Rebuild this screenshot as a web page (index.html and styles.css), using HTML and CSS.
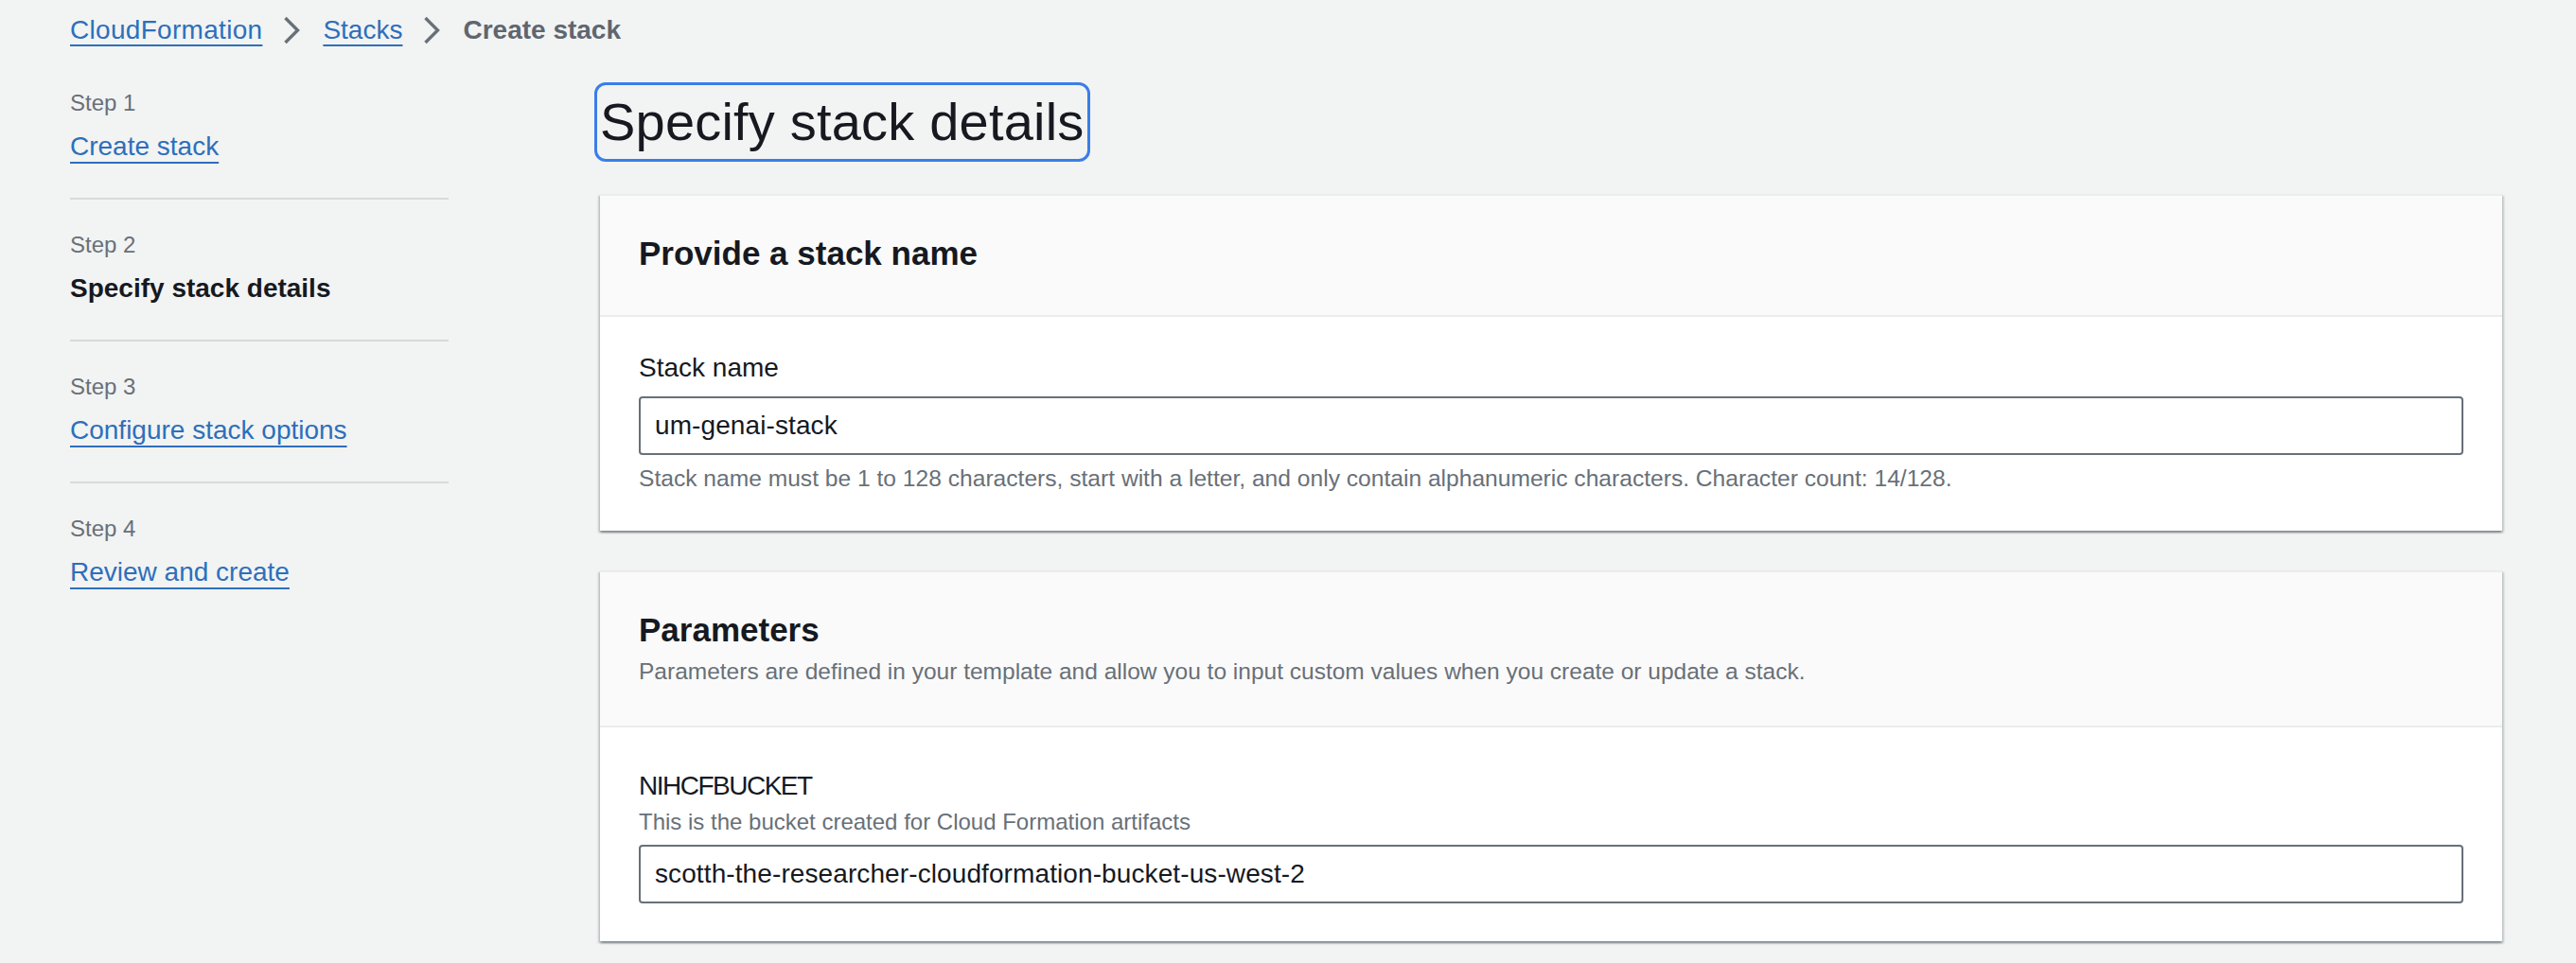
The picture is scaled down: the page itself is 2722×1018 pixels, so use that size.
FILE: index.html
```html
<!DOCTYPE html>
<html lang="en">
<head>
<meta charset="utf-8">
<title>Create stack - CloudFormation</title>
<link rel="stylesheet" href="styles.css">
</head>
<body>
<nav class="breadcrumbs" aria-label="Breadcrumbs">
  <a class="crumb-link" href="#">CloudFormation</a>
  <svg class="crumb-sep" viewBox="0 0 20 30" aria-hidden="true"><path d="M3.5 2 L16.5 15 L3.5 28"/></svg>
  <a class="crumb-link" href="#">Stacks</a>
  <svg class="crumb-sep" viewBox="0 0 20 30" aria-hidden="true"><path d="M3.5 2 L16.5 15 L3.5 28"/></svg>
  <span class="crumb-current">Create stack</span>
</nav>
<div class="layout">
  <aside class="steps">
    <ol class="step-list">
      <li class="step">
        <span class="step-num">Step 1</span>
        <a class="step-link" href="#">Create stack</a>
      </li>
      <li class="step">
        <span class="step-num">Step 2</span>
        <span class="step-current">Specify stack details</span>
      </li>
      <li class="step">
        <span class="step-num">Step 3</span>
        <a class="step-link" href="#">Configure stack options</a>
      </li>
      <li class="step">
        <span class="step-num">Step 4</span>
        <a class="step-link" href="#">Review and create</a>
      </li>
    </ol>
  </aside>
  <main class="content">
    <h1 class="page-title">Specify stack details</h1>
    <section class="card">
      <div class="card-header">
        <h2 class="card-title">Provide a stack name</h2>
      </div>
      <div class="card-body">
        <label class="field-label" for="stack-name">Stack name</label>
        <input class="text-input" id="stack-name" type="text" value="um-genai-stack">
        <p class="field-hint">Stack name must be 1 to 128 characters, start with a letter, and only contain alphanumeric characters. Character count: 14/128.</p>
      </div>
    </section>
    <section class="card card-params">
      <div class="card-header">
        <h2 class="card-title">Parameters</h2>
        <p class="card-desc">Parameters are defined in your template and allow you to input custom values when you create or update a stack.</p>
      </div>
      <div class="card-body card-body-params">
        <label class="field-label field-label-caps" for="nihcf">NIHCFBUCKET</label>
        <p class="field-desc">This is the bucket created for Cloud Formation artifacts</p>
        <input class="text-input text-input-tight" id="nihcf" type="text" value="scotth-the-researcher-cloudformation-bucket-us-west-2">
      </div>
    </section>
  </main>
</div>
</body>
</html>
```
FILE: styles.css
```css
html, body {
  margin: 0;
  padding: 0;
}
body {
  background: #f2f3f3;
  color: #16191f;
  font-family: "Liberation Sans", Arial, sans-serif;
  font-size: 28px;
  line-height: 40px;
  padding: 12px 78px 0 74px;
  min-height: 1018px;
  box-sizing: border-box;
  overflow: hidden;
}

/* Breadcrumbs */
.breadcrumbs {
  display: flex;
  align-items: center;
  height: 40px;
  line-height: 40px;
}
.crumb-link {
  color: #2d6fbb;
  text-decoration: underline;
  text-decoration-thickness: 2px;
  text-underline-offset: 6px;
}
.crumb-link:first-child {
  letter-spacing: 0.3px;
}
.crumb-sep {
  width: 20px;
  height: 30px;
  margin: 0 23px 0 21px;
  fill: none;
  stroke: #687078;
  stroke-width: 3.4;
  stroke-linecap: butt;
  stroke-linejoin: miter;
}
.crumb-current {
  color: #5f666f;
  font-weight: bold;
}

/* Layout */
.layout {
  display: flex;
  align-items: flex-start;
  margin-top: 41px;
}
.steps {
  width: 400px;
  flex: none;
}
.step-list {
  list-style: none;
  margin: 0;
  padding: 0;
}
.step {
  display: flex;
  flex-direction: column;
  align-items: flex-start;
  padding: 32px 0 34px;
}
.step:first-child {
  padding-top: 0;
}
.step + .step {
  border-top: 2px solid #d5dbdb;
}
.step-num {
  font-size: 24px;
  line-height: 32px;
  color: #687078;
  margin-bottom: 10px;
}
.step-link {
  color: #2d6fbb;
  text-decoration: underline;
  text-decoration-thickness: 2px;
  text-underline-offset: 7px;
}
.step-current {
  font-weight: bold;
  color: #16191f;
}

/* Main */
.content {
  flex: 1;
  margin-left: 160px;
  min-width: 0;
}
.page-title {
  display: inline-block;
  margin: 0;
  font-size: 56px;
  line-height: 72px;
  font-weight: normal;
  color: #16191f;
  outline: 3px solid #3a7ee8;
  outline-offset: 3px;
  border-radius: 6px;
  letter-spacing: 0.2px;
}
.card {
  margin-top: 40px;
  background: #ffffff;
  border-top: 2px solid #eaeded;
  box-shadow: 0 2px 2px 0 rgba(0, 28, 36, 0.3), 2px 2px 2px 0 rgba(0, 28, 36, 0.15), -2px 2px 2px 0 rgba(0, 28, 36, 0.15);
}
.card-params {
  margin-top: 42px;
}
.card-header {
  background: #fafafa;
  border-bottom: 2px solid #eaeded;
  padding: 37px 41px 41px;
}
.card-title {
  margin: 0;
  font-size: 35px;
  line-height: 48px;
  font-weight: bold;
  color: #16191f;
}
.card-desc {
  margin: 4px 0 0;
  font-size: 24.5px;
  line-height: 32px;
  color: #687078;
}
.card-body {
  padding: 34px 41px 39px;
}
.card-body-params {
  padding-top: 42px;
  padding-bottom: 40px;
}
.field-label {
  display: block;
  font-size: 28px;
  line-height: 40px;
  color: #16191f;
}
.field-label-caps {
  letter-spacing: -1.5px;
}
.text-input {
  display: block;
  box-sizing: border-box;
  width: 100%;
  height: 62px;
  margin: 10px 0 0;
  padding: 0 15px;
  border: 2px solid #687078;
  border-radius: 4px;
  background: #ffffff;
  font-family: "Liberation Sans", Arial, sans-serif;
  font-size: 28px;
  letter-spacing: 0.1px;
  color: #16191f;
  outline: none;
}
.text-input-tight {
  margin-top: 8px;
}
.field-hint {
  margin: 9px 0 0;
  font-size: 24.6px;
  line-height: 32px;
  color: #687078;
}
.field-desc {
  margin: 2px 0 0;
  font-size: 24px;
  line-height: 32px;
  color: #687078;
}
```
